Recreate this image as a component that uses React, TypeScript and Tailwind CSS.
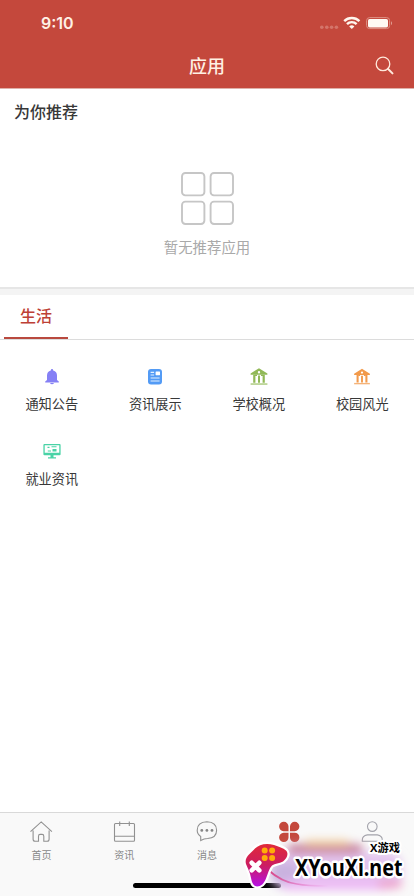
import type { ReactNode } from "react";

const ink = { fill: "none", stroke: "#919191", strokeWidth: 1.1 } as const;

function StatusBar() {
  return (
    <div className="flex h-11 items-center justify-between pl-[41px] pr-[22px] pt-[1px]">
      <span className="font-['Inter','Liberation_Sans',sans-serif] text-[16px] font-semibold leading-5 text-[#fff0e5]">
        9:10
      </span>
      <svg className="h-4 w-[74px]" viewBox="0 0 74 16">
        <g fill="#d4756a">
          <circle cx="3.8" cy="12.2" r="1.8" />
          <circle cx="8.8" cy="12.2" r="1.8" />
          <circle cx="13.6" cy="12.2" r="1.8" />
          <circle cx="18.4" cy="12.2" r="1.8" />
        </g>
        <g fill="none" stroke="#fff6ee" strokeWidth="2.4">
          <path d="M26.2 6.1a10.8 10.8 0 0 1 15.2 0" />
          <path d="M29 9.2a6.7 6.7 0 0 1 9.6 0" />
        </g>
        <path d="M31.2 11.4a3.8 3.8 0 0 1 5.2 0L33.8 14z" fill="#fff6ee" />
        <rect x="48.6" y="2.6" width="23" height="11" rx="3" fill="none" stroke="#dd9185" />
        <rect x="50" y="4" width="20" height="8.4" rx="1.6" fill="#fffaf4" />
        <path d="M73 6.3v3.8q1-.5 1-1.9t-1-1.9" fill="#e2a094" />
      </svg>
    </div>
  );
}

function Header() {
  return (
    <header className="h-[89px] shrink-0 border-b border-[#dfb0a8] bg-[#c4483c]">
      <StatusBar />
      <div className="grid h-[42px] grid-cols-[1fr_auto_1fr] items-center">
        <h1 className="col-start-2 text-[18px] font-medium leading-6 text-[#fff1e4]">应用</h1>
        <svg className="mr-5 size-[20px] justify-self-end" viewBox="0 0 20 20" fill="none" stroke="#ffe9dc">
          <circle cx="9" cy="8.9" r="6.8" strokeWidth="1.3" />
          <path d="m13.9 13.8 4.6 4.6" strokeWidth="2" strokeLinecap="round" />
        </svg>
      </div>
    </header>
  );
}

function EmptyIcon() {
  return (
    <svg className="size-[53px]" viewBox="0 0 53 53" fill="none" stroke="#c6c6c6" strokeWidth="1.9">
      <rect x="1" y="1" width="22.4" height="22.4" rx="3.4" />
      <rect x="29.6" y="1" width="22.4" height="22.4" rx="3.4" />
      <rect x="1" y="29.6" width="22.4" height="22.4" rx="3.4" />
      <rect x="29.6" y="29.6" width="22.4" height="22.4" rx="3.4" />
    </svg>
  );
}

function Bell() {
  return (
    <svg className="size-[18px]" viewBox="0 0 18 18" fill="#8580f5">
      <path d="M9 1q1.2 0 1.2 1.4 3.8 1 3.8 5.2v4.3l1.8 1.7v.8H2.2v-.8L4 11.9V7.6q0-4.2 3.8-5.2Q7.8 1 9 1z" />
      <path d="M7 15h4q-.5 1.2-2 1.2T7 15z" />
    </svg>
  );
}

function NewsCard() {
  return (
    <svg className="size-[18px]" viewBox="0 0 18 18">
      <rect x="2" y="1" width="14" height="15.4" rx="3" fill="#539bf5" />
      <path d="M4.6 4.3h3.5M4.6 7h3.5M4.6 10h9M4.6 13h9" stroke="#e4f1ff" strokeWidth="1.2" />
      <rect x="9.6" y="3.5" width="4.4" height="3.7" rx=".4" fill="#fff" />
    </svg>
  );
}

function Building({ color, inset = 0 }: { color: string; inset?: number }) {
  const size = 18 + inset * 2;
  return (
    <svg className="size-[18px]" viewBox={`${-inset} ${-inset} ${size} ${size}`} fill={color}>
      <path fillRule="evenodd" d="M9 .2 17.4 5.5v1.3H.6V5.5zM9 3a1.2 1.2 0 1 0 0 2.400A1.2 1.2 0 0 0 9 3z" />
      <path d="M3.200 6.800h2.200v8H3.200zM8 7.600h2v7.200H8zM12.600 6.800h2.200v8h-2.200z" />
      <path d="M5 6.800h2v1.200H5zM11 6.800h2v1.200h-2z" />
      <path d="M.6 15.300h16.800v1.500H.6z" opacity=".75" />
    </svg>
  );
}

function Monitor() {
  return (
    <svg className="size-[18px]" viewBox="0 1 18 18" fill="#49d3a6">
      <path fillRule="evenodd" d="M1.400 2h15.200q1 0 1 1v9.300q0 1-1 1H1.400q-1 0-1-1V3q0-1 1-1zm.3 1.200v7.500h14.600V3.200z" />
      <path d="M4.500 4.800h2V6h-2zM8.500 4.300h5v1h-5zM4.800 8.500H8v1H4.800zM9.500 7h4v2.500h-4zM7.500 13h3v2.300h-3zM5 15.200h8v1.300H5z" />
    </svg>
  );
}

const apps: { label: string; icon: ReactNode }[] = [
  { label: "通知公告", icon: <Bell /> },
  { label: "资讯展示", icon: <NewsCard /> },
  { label: "学校概况", icon: <Building color="#91b957" /> },
  { label: "校园风光", icon: <Building color="#f29a4b" inset={0.6} /> },
  { label: "就业资讯", icon: <Monitor /> },
];

const tabs: { id: string; label?: string; icon: ReactNode }[] = [
  {
    id: "home",
    label: "首页",
    icon: (
      <svg className="size-6" viewBox="0 0 24 24" {...ink}>
        <path d="M1.500 11.600 12.200 1.900l10.700 9.700M4.100 10.500v8.700q0 2 2 2h3.400v-5q0-1.800 1.600-1.800h2q1.700 0 1.700 1.800v5h3.300q2 0 2-2v-8.700" />
      </svg>
    ),
  },
  {
    id: "news",
    label: "资讯",
    icon: (
      <svg className="size-6" viewBox="0 0 24 24" {...ink}>
        <path d="M7.500 3.500h10M4.300 3.500H3.500q-1 0-1 1v15.700q0 1 1 1h18q1 0 1-1V4.500q0-1-1-1h-4M3.500 3.500h4M2.500 16.300h20M7.700 1.500v4.400M17.300 1.500v4.400" />
      </svg>
    ),
  },
  {
    id: "message",
    label: "消息",
    icon: (
      <svg className="size-6" viewBox="0 0 24 24" {...ink}>
        <path d="M5.700 20.500v-4q-3.500-2.300-3.500-6.200 0-8.200 9.700-8.500 9.700.3 9.700 8.500 0 7.700-9 8.200-3.500.1-6.900 2z" />
        <g fill="#858585" stroke="none">
          <circle cx="6.800" cy="10.400" r="1.400" />
          <circle cx="11.900" cy="10.400" r="1.400" />
          <circle cx="17" cy="10.400" r="1.400" />
        </g>
      </svg>
    ),
  },
  {
    id: "apps",
    icon: (
      <svg className="size-6" viewBox="0.9 0 24 24" fill="#c4483c">
        <path d="M11.400 11.200H6.500a4.700 4.700 0 1 1 4.900-4.700zM12.900 11.200V6.500a4.700 4.700 0 1 1 4.700 4.700zM11.400 12.700v4.700a4.700 4.700 0 1 1-4.900-4.700zM12.900 12.700h4.700a4.700 4.700 0 1 1-4.700 4.700z" />
      </svg>
    ),
  },
  {
    id: "profile",
    icon: (
      <svg className="size-6" viewBox="0.7 0 24 24" {...ink} stroke="#a3a3ab">
        <circle cx="12" cy="6.600" r="4.800" />
        <path d="M2 21.200v-1.300q0-4 5-5h10q5 1 5 5v1.300z" />
      </svg>
    ),
  },
];

function SiteBadge() {
  return (
    <svg className="absolute bottom-0 right-0 h-[66px] w-[184px]" viewBox="230 830 184 66">
      <defs>
        <linearGradient id="pad" x1="0" y1="0" x2="0" y2="1">
          <stop offset="0" stopColor="#e02a39" />
          <stop offset=".5" stopColor="#cc1d60" />
          <stop offset="1" stopColor="#b611e6" />
        </linearGradient>
        <linearGradient id="wire">
          <stop offset="0" stopColor="#d83b7d" />
          <stop offset="1" stopColor="#e66bd5" stopOpacity="0" />
        </linearGradient>
        <filter id="soft" x="-30%" y="-60%" width="160%" height="220%">
          <feGaussianBlur stdDeviation="5" />
        </filter>
      </defs>
      <g filter="url(#soft)">
        <rect x="272" y="852" width="130" height="38" rx="15" fill="#e3c5ee" />
        <rect x="287" y="844" width="76" height="10" rx="5" fill="#c9849e" />
        <rect x="305" y="840" width="44" height="6" rx="3" fill="#f2cf9e" />
        <rect x="270" y="862" width="30" height="22" rx="8" fill="#c9b2df" />
        <rect x="285" y="880" width="103" height="10" rx="5" fill="#edb8f5" />
        <rect x="378" y="880" width="24" height="8" rx="4" fill="#efa0ca" />
      </g>
      <path d="M267 869c10 9 20 14 30 15 10 2 20 2 32 2" fill="none" stroke="url(#wire)" strokeWidth="1.700" />
      <path
        d="M255 848.500c4-4 11-6 19-3.500 5 1.500 9 3 12 5.500 3 3 1 8-3 11-4 2-8 2-11 4-3 3-4 8-6 13-2 5-5 8-9 8-4-.5-5-4-6-8.500-1-6-3-9-5-14-2-7 5-11 9-15.500z"
        fill="url(#pad)"
        stroke="#fff"
        strokeWidth="4.500"
        strokeLinejoin="round"
        paintOrder="stroke"
      />
      <g fill="#ffac09">
        <circle cx="264.700" cy="850.500" r="3" />
        <circle cx="272.100" cy="850.500" r="3" />
        <circle cx="264.700" cy="857.900" r="3" />
        <circle cx="272.100" cy="857.900" r="3" />
      </g>
      <path d="m251.700 862.800 7.600 7.600m0-7.600-7.600 7.600" stroke="#fff" strokeWidth="4.600" strokeLinecap="round" />
      <g stroke="#fff" strokeLinejoin="round" paintOrder="stroke">
        <text
          x="295"
          y="876"
          textLength="107.500"
          lengthAdjust="spacingAndGlyphs"
          strokeWidth="5"
          className="font-['Noto_Sans','Open_Sans',sans-serif] text-[24px] font-bold"
        >
          XYouXi.net
        </text>
        <text
          x="370"
          y="852"
          textLength="30"
          lengthAdjust="spacingAndGlyphs"
          strokeWidth="4"
          className="font-['Open_Sans','Noto_Sans_CJK_SC',sans-serif] text-[11px] font-bold"
        >
          X游戏
        </text>
      </g>
    </svg>
  );
}

export default function App() {
  return (
    <div className="relative flex h-[896px] w-[414px] flex-col overflow-hidden bg-white font-['Noto_Sans_CJK_SC',sans-serif] text-[#383838]">
      <Header />

      {/* Recommended apps */}
      <section className="flex h-[198px] shrink-0 flex-col">
        <h2 className="pl-3.5 pt-2.5 text-[16px] font-medium leading-6">为你推荐</h2>
        <div className="flex flex-col items-center pt-[49px]">
          <EmptyIcon />
          <p className="mt-3 text-[14.4px] leading-5 text-[#a9a9a9]">暂无推荐应用</p>
        </div>
      </section>
      <div className="h-2 shrink-0 border-t-2 border-[#e6e6e6] bg-[#f4f4f4]" />

      {/* Category tabs */}
      <nav className="flex h-[45px] shrink-0 border-b border-[#dcdcdc] pl-1">
        <button className="h-[44px] w-16 border-b-2 border-[#b9493f] pb-0.5 text-[16px] font-medium text-[#bd4036]">
          生活
        </button>
      </nav>

      <main className="grid flex-1 auto-rows-[75px] grid-cols-4 pt-7">
        {apps.map((app) => (
          <div key={app.label} className="flex flex-col items-center">
            {app.icon}
            <span className="mt-2 text-[13.2px] leading-5">{app.label}</span>
          </div>
        ))}
      </main>

      {/* Bottom navigation */}
      <footer className="flex h-[84px] shrink-0 flex-col items-center justify-between border-t border-[#d9d9d9] bg-[#f9f9f9] pb-[8.5px]">
        <div className="grid w-full grid-cols-5 pt-[7px]">
          {tabs.map((tab) => (
            <div key={tab.id} className="flex flex-col items-center">
              {tab.icon}
              {tab.label && (
                <span className="mt-1 text-[10px] leading-[14px] text-[#888]">{tab.label}</span>
              )}
            </div>
          ))}
        </div>
        <div className="h-[5px] w-[148px] rounded-full bg-black" />
      </footer>
      <SiteBadge />
    </div>
  );
}
